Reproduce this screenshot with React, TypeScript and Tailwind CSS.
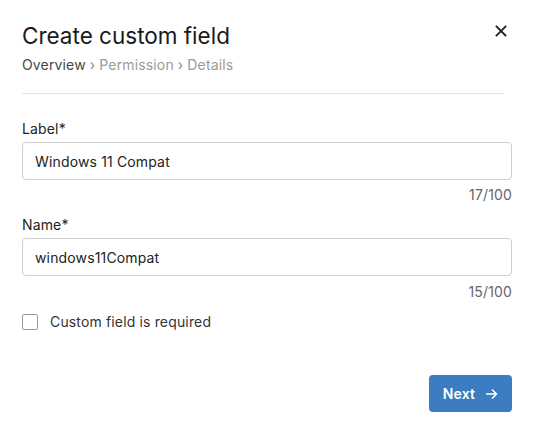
import React from "react";

export default function App() {
  return (
    <div className="w-[536px] h-[433px] bg-white overflow-hidden tracking-[0.15px]" style={{ fontFamily: "Inter, 'Noto Sans', sans-serif" }}>
      <div className="pl-[22px] pr-[24px] pt-[22px] relative">
        <button className="absolute left-[495px] top-[25px] w-[12px] h-[12px] flex items-center justify-center">
          <svg width="12" height="12" viewBox="0 0 12 12">
            <path d="M1.5 1.5 L10.5 10.5 M10.5 1.5 L1.5 10.5" stroke="#222" strokeWidth="1.8" strokeLinecap="square" />
          </svg>
        </button>
        <h1 className="text-[22.5px] leading-[28px] text-[#1a1a1a] font-normal tracking-[0px]">Create custom field</h1>
        <div className="mt-[5px] text-[14px] leading-[20px] flex items-center">
          <span className="text-[#474747]">Overview</span>
          <span className="text-[#8a8a8a] mx-[4px]">›</span>
          <span className="text-[#9a9a9a]">Permission</span>
          <span className="text-[#8a8a8a] mx-[4px]">›</span>
          <span className="text-[#9a9a9a]">Details</span>
        </div>
        <div className="mt-[18px] mr-[8px] h-px bg-[#e3e3e3]" />

        <div className="mt-[25px] text-[14px] leading-[20px] text-[#222]">Label*</div>
        <div className="mt-[3px] h-[38px] border border-[#cfcfcf] rounded-[4px] flex items-center px-[12px] text-[14px] text-[#222]">
          Windows 11 Compat
        </div>
        <div className="mt-[5px] text-right text-[14px] leading-[20px] text-[#666]">17/100</div>

        <div className="mt-[10px] text-[14px] leading-[20px] text-[#222]">Name*</div>
        <div className="mt-[3px] h-[38px] border border-[#cfcfcf] rounded-[4px] flex items-center px-[12px] text-[14px] text-[#222]">
          windows11Compat
        </div>
        <div className="mt-[6px] text-right text-[14px] leading-[20px] text-[#666]">15/100</div>

        <div className="mt-[10px] flex items-center">
          <span className="w-[16px] h-[16px] border border-[#9a9a9a] rounded-[2px] bg-white" />
          <span className="ml-[12px] text-[14px] leading-[20px] text-[#333]">Custom field is required</span>
        </div>

        <div className="mt-[43px] flex justify-end">
          <button className="w-[83px] h-[37px] bg-[#3b7dc0] rounded-[4px] text-white text-[14px] font-semibold flex items-center justify-center gap-[10px]">
            <span>Next</span>
            <svg width="13" height="12" viewBox="0 0 13 12">
              <path d="M1 6 H11.5 M7 1.5 L11.5 6 L7 10.5" stroke="white" strokeWidth="1.5" fill="none" />
            </svg>
          </button>
        </div>
      </div>
    </div>
  );
}
